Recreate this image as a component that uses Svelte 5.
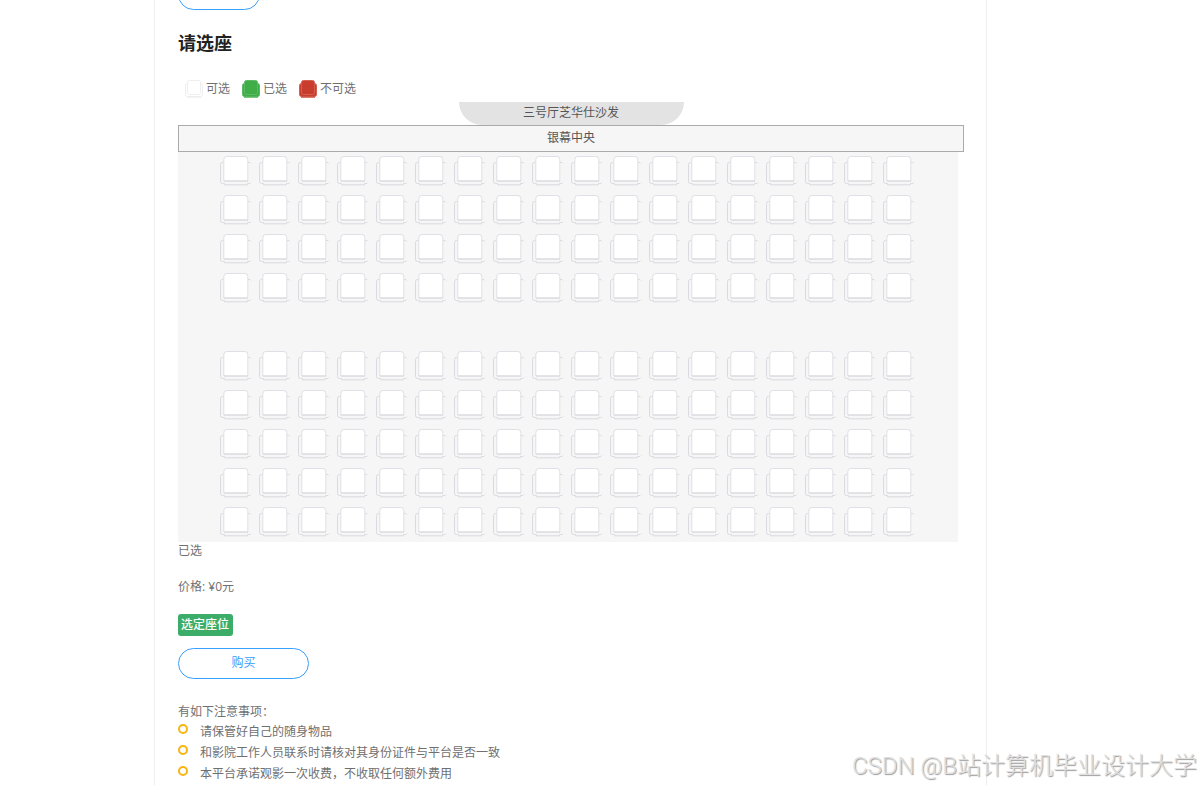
<script lang="ts">
	interface Seat {
		row: number;
		col: number;
		label: string;
	}

	const rows = 10;
	const cols = 18;
	const aisle = 5;
	const price = 0;

	const legend = [
		{ state: 'free', text: '可选' },
		{ state: 'picked', text: '已选' },
		{ state: 'taken', text: '不可选' }
	];

	const notices = [
		'请保管好自己的随身物品',
		'和影院工作人员联系时请核对其身份证件与平台是否一致',
		'本平台承诺观影一次收费，不收取任何额外费用'
	];

	// One entry per row, the aisle row stays empty
	const seatRows: Seat[][] = Array.from({ length: rows }, (_, r) => {
		if (r + 1 === aisle) return [];
		return Array.from({ length: cols }, (_, c) => ({
			row: r + 1,
			col: c + 1,
			label: `${r + 1}排${c + 1}座`
		}));
	});

	let picked: string[] = $state([]);
	let confirmed: string[] = $state([]);
	let total = $derived(confirmed.length * price);

	function toggle(seat: Seat) {
		if (picked.includes(seat.label)) {
			picked = picked.filter((label) => label !== seat.label);
		} else {
			picked = [...picked, seat.label];
		}
	}

	function confirmSeats() {
		confirmed = [...picked];
	}
</script>

<div class="page" lang="zh-CN">
	<main class="column">
		<div class="previous">
			<button class="pill pill-small" type="button" aria-label="返回"></button>
		</div>

		<h2>请选座</h2>

		<ul class="legend">
			{#each legend as item}
				<li class={item.state}>
					<svg width="18" height="18" viewBox="0 0 18 18" aria-hidden="true">
						<rect class="base" x="0.5" y="3.5" width="17" height="13" rx="2" />
						<rect class="back" x="2.5" y="0.5" width="13" height="14" rx="2" />
						<path class="foot" d="M2 17.2h14" />
					</svg>
					<span>{item.text}</span>
				</li>
			{/each}
		</ul>

		<div class="hall">三号厅芝华仕沙发</div>
		<div class="screen">银幕中央</div>

		<div class="seats">
			{#each seatRows as row}
				<div class="seat-row">
					{#each row as seat}
						<button
							class="seat"
							class:picked={picked.includes(seat.label)}
							type="button"
							aria-label={seat.label}
							aria-pressed={picked.includes(seat.label)}
							onclick={() => toggle(seat)}
						>
							<svg width="39" height="39" viewBox="0 0 39 39" aria-hidden="true">
								<path class="arm" d="M7 10.5H5.5q-2 0-2 2v17q0 2 2 2H7.5v1.3h23v-1.3h2.500l1-1M31 10.500h2l1 1" />
								<path class="back" d="M6.800 29v-21.500q0-3 3-3h18q3 0 3 3v21.500z" />
								<path class="front" d="M7 29h24" />
							</svg>
						</button>
					{/each}
				</div>
			{/each}
		</div>

		<p class="chosen">已选 {confirmed.join(' ')}</p>
		<p class="price">价格: ¥{total}元</p>

		<button class="confirm" type="button" onclick={confirmSeats}>选定座位</button>
		<button class="pill" type="button">购买</button>

		<p class="notice-title">有如下注意事项：</p>
		<ul class="notices">
			{#each notices as notice}
				<li>{notice}</li>
			{/each}
		</ul>
	</main>

	<div class="watermark">CSDN @B站计算机毕业设计大学</div>
</div>

<style>
	:global(body) {
		margin: 0;
		background: #fff;
	}

	.page {
		box-sizing: border-box;
		min-height: 100vh;
		padding-right: 60px;
		display: flex;
		justify-content: center;
		font-family: 'Open Sans', 'Noto Sans CJK SC', sans-serif;
		font-size: 12px;
		color: #707070;
	}

	.column {
		box-sizing: border-box;
		width: 100%;
		max-width: 833px;
		padding: 0 22px 0 23px;
		border-left: 1px solid #eee;
		border-right: 1px solid #eee;
	}

	h2,
	p,
	ul {
		margin: 0;
		padding: 0;
	}

	ul {
		list-style: none;
	}

	button {
		font: inherit;
		cursor: pointer;
	}

	/* Tail of the block above */
	.previous {
		height: 10px;
		overflow: hidden;
		display: flex;
		align-items: flex-end;
	}

	.pill {
		display: block;
		box-sizing: border-box;
		width: 131px;
		height: 31px;
		padding: 0 0 3px;
		border: 1px solid #3a9efd;
		border-radius: 16px;
		background: #fff;
		color: #3a9efd;
	}

	.pill-small {
		flex: none;
		width: 82px;
	}

	h2 {
		padding-top: 19px;
		font-size: 18px;
		line-height: 28px;
		font-weight: 700;
		color: #222;
	}

	.legend {
		display: flex;
		gap: 12px;
		padding: 21px 0 2px 7px;
	}

	.legend li {
		display: flex;
		align-items: center;
		gap: 3px;
		line-height: 22px;
	}

	.legend svg {
		stroke: #eee;
		fill: #fff;
	}

	.legend .picked svg {
		stroke: #5cb965;
		fill: #3fae49;
	}

	.legend .taken svg {
		stroke: #d4604f;
		fill: #c83d2d;
	}

	.legend .picked .foot {
		stroke: #3fae49;
	}

	.legend .taken .foot {
		stroke: #c83d2d;
	}

	.hall {
		width: 225px;
		height: 23px;
		margin: 0 auto;
		border-radius: 0 0 23px 23px;
		background: #e3e3e3;
		line-height: 22px;
		text-align: center;
		color: #555;
	}

	.screen {
		padding-bottom: 1px;
		border: 1px solid #aaa;
		background: #f6f6f6;
		line-height: 24px;
		text-align: center;
		color: #555;
	}

	.seats {
		box-sizing: border-box;
		width: 780px;
		max-width: 100%;
		padding: 0 39px;
		background: #f6f6f6;
		overflow: hidden;
	}

	.seat-row {
		display: flex;
		height: 39px;
	}

	.seat {
		flex: none;
		width: 39px;
		height: 39px;
		padding: 0;
		border: 0;
		background: none;
	}

	.seat svg {
		display: block;
		fill: none;
	}

	.seat .arm {
		stroke: #dadae0;
	}

	.seat .back {
		fill: #fff;
		stroke: #dfdfe5;
	}

	.seat .front {
		stroke: #d8d8dd;
	}

	.seat.picked .back {
		fill: #3fae49;
	}

	.chosen,
	.price {
		padding-bottom: 18px;
		line-height: 18px;
	}

	.confirm {
		display: block;
		height: 22px;
		margin-bottom: 12px;
		padding: 0 4px 2px 3px;
		border: 0;
		border-radius: 3px;
		background: #3cad68;
		color: #fff;
		font-weight: 500;
	}

	.notice-title {
		padding-top: 24px;
		line-height: 18px;
	}

	.notices li {
		display: flex;
		gap: 12px;
		line-height: 21px;
	}

	.notices li::before {
		content: '';
		box-sizing: border-box;
		flex: none;
		width: 10px;
		height: 10px;
		margin-top: 3px;
		border: 2px solid #f9b410;
		border-radius: 50%;
	}

	/* Sits over the page corner */
	.watermark {
		position: absolute;
		right: 4px;
		bottom: 1px;
		font-family: Roboto, 'Noto Sans CJK SC', sans-serif;
		font-size: 24px;
		line-height: 36px;
		font-weight: 300;
		white-space: nowrap;
		color: #e0e0e0;
		text-shadow: 1px 1px 1px #999;
	}
</style>
